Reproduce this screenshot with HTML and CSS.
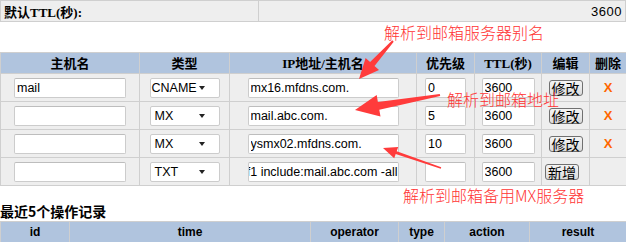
FILE: index.html
```html
<!DOCTYPE html>
<html lang="zh-CN">
<head>
<meta charset="utf-8">
<title>DNS</title>
<link rel="stylesheet" href="styles.css">
</head>
<body>
<table class="ttl-table">
  <tr>
    <td class="ttl-label">默认TTL(秒):</td>
    <td class="ttl-value">3600</td>
  </tr>
</table>

<table class="rec-table">
  <colgroup>
    <col class="c-host"><col class="c-type"><col class="c-ip"><col class="c-pri"><col class="c-ttl"><col class="c-edit"><col class="c-del">
  </colgroup>
  <tr class="head-row">
    <th>主机名</th><th>类型</th><th>IP地址/主机名</th><th>优先级</th><th>TTL(秒)</th><th>编辑</th><th>删除</th>
  </tr>
  <tr class="rec-row">
    <td><input class="in in-host" value="mail"></td>
    <td><span class="sel sel-long">CNAME</span></td>
    <td><input class="in in-ip" value="mx16.mfdns.com."></td>
    <td><input class="in in-pri" value="0"></td>
    <td><input class="in in-ttl" value="3600"></td>
    <td><button class="btn">修改</button></td>
    <td><span class="del">X</span></td>
  </tr>
  <tr class="rec-row">
    <td><input class="in in-host" value=""></td>
    <td><span class="sel">MX</span></td>
    <td><input class="in in-ip" value="mail.abc.com."></td>
    <td><input class="in in-pri" value="5"></td>
    <td><input class="in in-ttl" value="3600"></td>
    <td><button class="btn">修改</button></td>
    <td><span class="del">X</span></td>
  </tr>
  <tr class="rec-row">
    <td><input class="in in-host" value=""></td>
    <td><span class="sel">MX</span></td>
    <td><input class="in in-ip" value="ysmx02.mfdns.com."></td>
    <td><input class="in in-pri" value="10"></td>
    <td><input class="in in-ttl" value="3600"></td>
    <td><button class="btn">修改</button></td>
    <td><span class="del">X</span></td>
  </tr>
  <tr class="rec-row">
    <td><input class="in in-host" value=""></td>
    <td><span class="sel">TXT</span></td>
    <td><div class="in in-ip scrolled"><span>v=spf1 include:mail.abc.com -all</span></div></td>
    <td><input class="in in-pri" value=""></td>
    <td><input class="in in-ttl" value="3600"></td>
    <td><button class="btn btn-new">新增</button></td>
    <td></td>
  </tr>
</table>

<div class="log-title">最近5个操作记录</div>
<table class="log-table">
  <colgroup>
    <col class="l-id"><col class="l-time"><col class="l-op"><col class="l-type"><col class="l-act"><col class="l-res">
  </colgroup>
  <tr class="log-head">
    <th>id</th><th>time</th><th>operator</th><th>type</th><th>action</th><th>result</th>
  </tr>
</table>

<div class="notes">
  <span class="note note-1">解析到邮箱服务器别名</span>
  <span class="note note-2">解析到邮箱地址</span>
  <span class="note note-3">解析到邮箱备用MX服务器</span>
  <svg class="arrows" width="626" height="242" viewBox="0 0 626 242">
    <polygon points="392.3,40.3 370.1,62.1 365.6,58.1 359,79 379,70.1 374.5,66.1 393.7,41.7"/>
    <polygon points="439.8,94 377.9,101.9 376.7,95 355,110 380.5,116.6 379.3,109.7 440.2,96"/>
    <polygon points="441.2,167.3 396.7,151.2 398.2,146.9 383,148 394.2,158.3 395.7,154 440.8,168.7"/>
  </svg>
</div>
</body>
</html>
```

FILE: styles.css
```css
html, body {
  margin: 0;
  padding: 0;
  background: #fff;
}
body {
  position: relative;
  width: 626px;
  height: 242px;
  overflow: hidden;
  font-family: "Liberation Sans", Arial, "Noto Sans CJK SC", sans-serif;
  font-size: 13px;
  color: #000;
}

table {
  border-collapse: collapse;
  table-layout: fixed;
  width: 626px;
}

/* top ttl row */
.ttl-table td {
  height: 21px;
  padding: 0 3px;
  border: 1px solid #cfcfcf;
  background: #eeeeee;
  box-sizing: border-box;
}
.ttl-label {
  width: 258px;
  font-family: "Liberation Serif", "Noto Sans CJK SC", serif;
  font-weight: bold;
  font-size: 13px;
}
.ttl-value {
  text-align: right;
  font-size: 13px;
  letter-spacing: 0.5px;
}

/* records table */
.rec-table {
  margin-top: 30px;
}
.c-host { width: 139px; }
.c-type { width: 90px; }
.c-ip { width: 187px; }
.c-pri { width: 58px; }
.c-ttl { width: 67px; }
.c-edit { width: 48px; }
.c-del { width: 37px; }

.rec-table th, .rec-table td {
  border: 1px solid #cfcfcf;
  padding: 0;
  text-align: center;
  vertical-align: middle;
}
.head-row th {
  height: 21px;
  box-sizing: border-box;
  background: #b0c4de;
  font-family: "Liberation Serif", "Noto Sans CJK SC", serif;
  font-weight: bold;
  font-size: 13px;
  line-height: 15px;
}
.rec-row td {
  height: 28px;
  box-sizing: border-box;
  background: #eeeeee;
}

.in {
  display: block;
  margin: 0 auto;
  height: 20px;
  box-sizing: border-box;
  border: 1px solid #cccccc;
  border-top-color: #bdbdbd;
  border-radius: 2px;
  background: #fff;
  padding: 0 2px;
  font-family: "Liberation Sans", Arial, sans-serif;
  font-size: 12.5px;
  color: #000;
  outline: none;
}
.in-host { width: 112px; }
.in-ip { width: 151px; }
.in-pri { width: 41px; }
.in-ttl { width: 53px; }

.scrolled {
  display: flex;
  justify-content: flex-end;
  align-items: center;
  overflow: hidden;
  white-space: nowrap;
  padding-right: 0;
  text-align: left;
}
.scrolled span {
  flex: none;
}

.sel {
  position: relative;
  display: block;
  margin: 0 auto;
  width: 70px;
  height: 20px;
  box-sizing: border-box;
  border: 1px solid #cccccc;
  border-radius: 2px;
  background: #fff;
  padding-left: 4px;
  text-align: left;
  line-height: 19px;
  font-size: 12.5px;
}
.sel-long {
  padding-left: 1px;
}
.sel::after {
  content: "";
  position: absolute;
  right: 14px;
  top: 7px;
  border-left: 3px solid transparent;
  border-right: 3px solid transparent;
  border-top: 4px solid #222;
}

.btn {
  display: block;
  margin: 0 auto;
  width: 34px;
  height: 16px;
  padding: 0;
  box-sizing: border-box;
  border: 1px solid #707070;
  border-radius: 3px;
  background: linear-gradient(#f4f4f4, #dcdcdc);
  font-family: "Noto Sans CJK SC", sans-serif;
  font-size: 14px;
  line-height: 14px;
  color: #000;
}
.btn-new {
  margin-left: 3px;
}

.del {
  color: #ff6600;
  font-weight: bold;
  font-size: 13px;
}

/* log */
.log-title {
  padding-top: 16px;
  height: 19px;
  line-height: 18px;
  font-family: "Noto Sans CJK SC", sans-serif;
  font-weight: bold;
  font-size: 14px;
}
.l-id { width: 69px; }
.l-time { width: 241px; }
.l-op { width: 88px; }
.l-type { width: 46px; }
.l-act { width: 85px; }
.l-res { width: 97px; }
.log-head th {
  height: 21px;
  box-sizing: border-box;
  background: #b0c4de;
  border: 1px solid #cfcfcf;
  padding: 0;
  font-size: 12px;
  font-weight: bold;
  text-align: center;
}

/* annotations */
.notes {
  position: absolute;
  left: 0;
  top: 0;
  width: 626px;
  height: 242px;
  pointer-events: none;
}
.note {
  position: absolute;
  font-family: "Noto Sans CJK SC", sans-serif;
  font-weight: 300;
  font-size: 16px;
  line-height: 20px;
  color: #ff3333;
  white-space: nowrap;
}
.note-1 { left: 384px; top: 22px; }
.note-2 { left: 447px; top: 89px; }
.note-3 { left: 403px; top: 185px; }
.arrows {
  position: absolute;
  left: 0;
  top: 0;
}
.arrows polygon {
  fill: #ff3b3b;
}
```
